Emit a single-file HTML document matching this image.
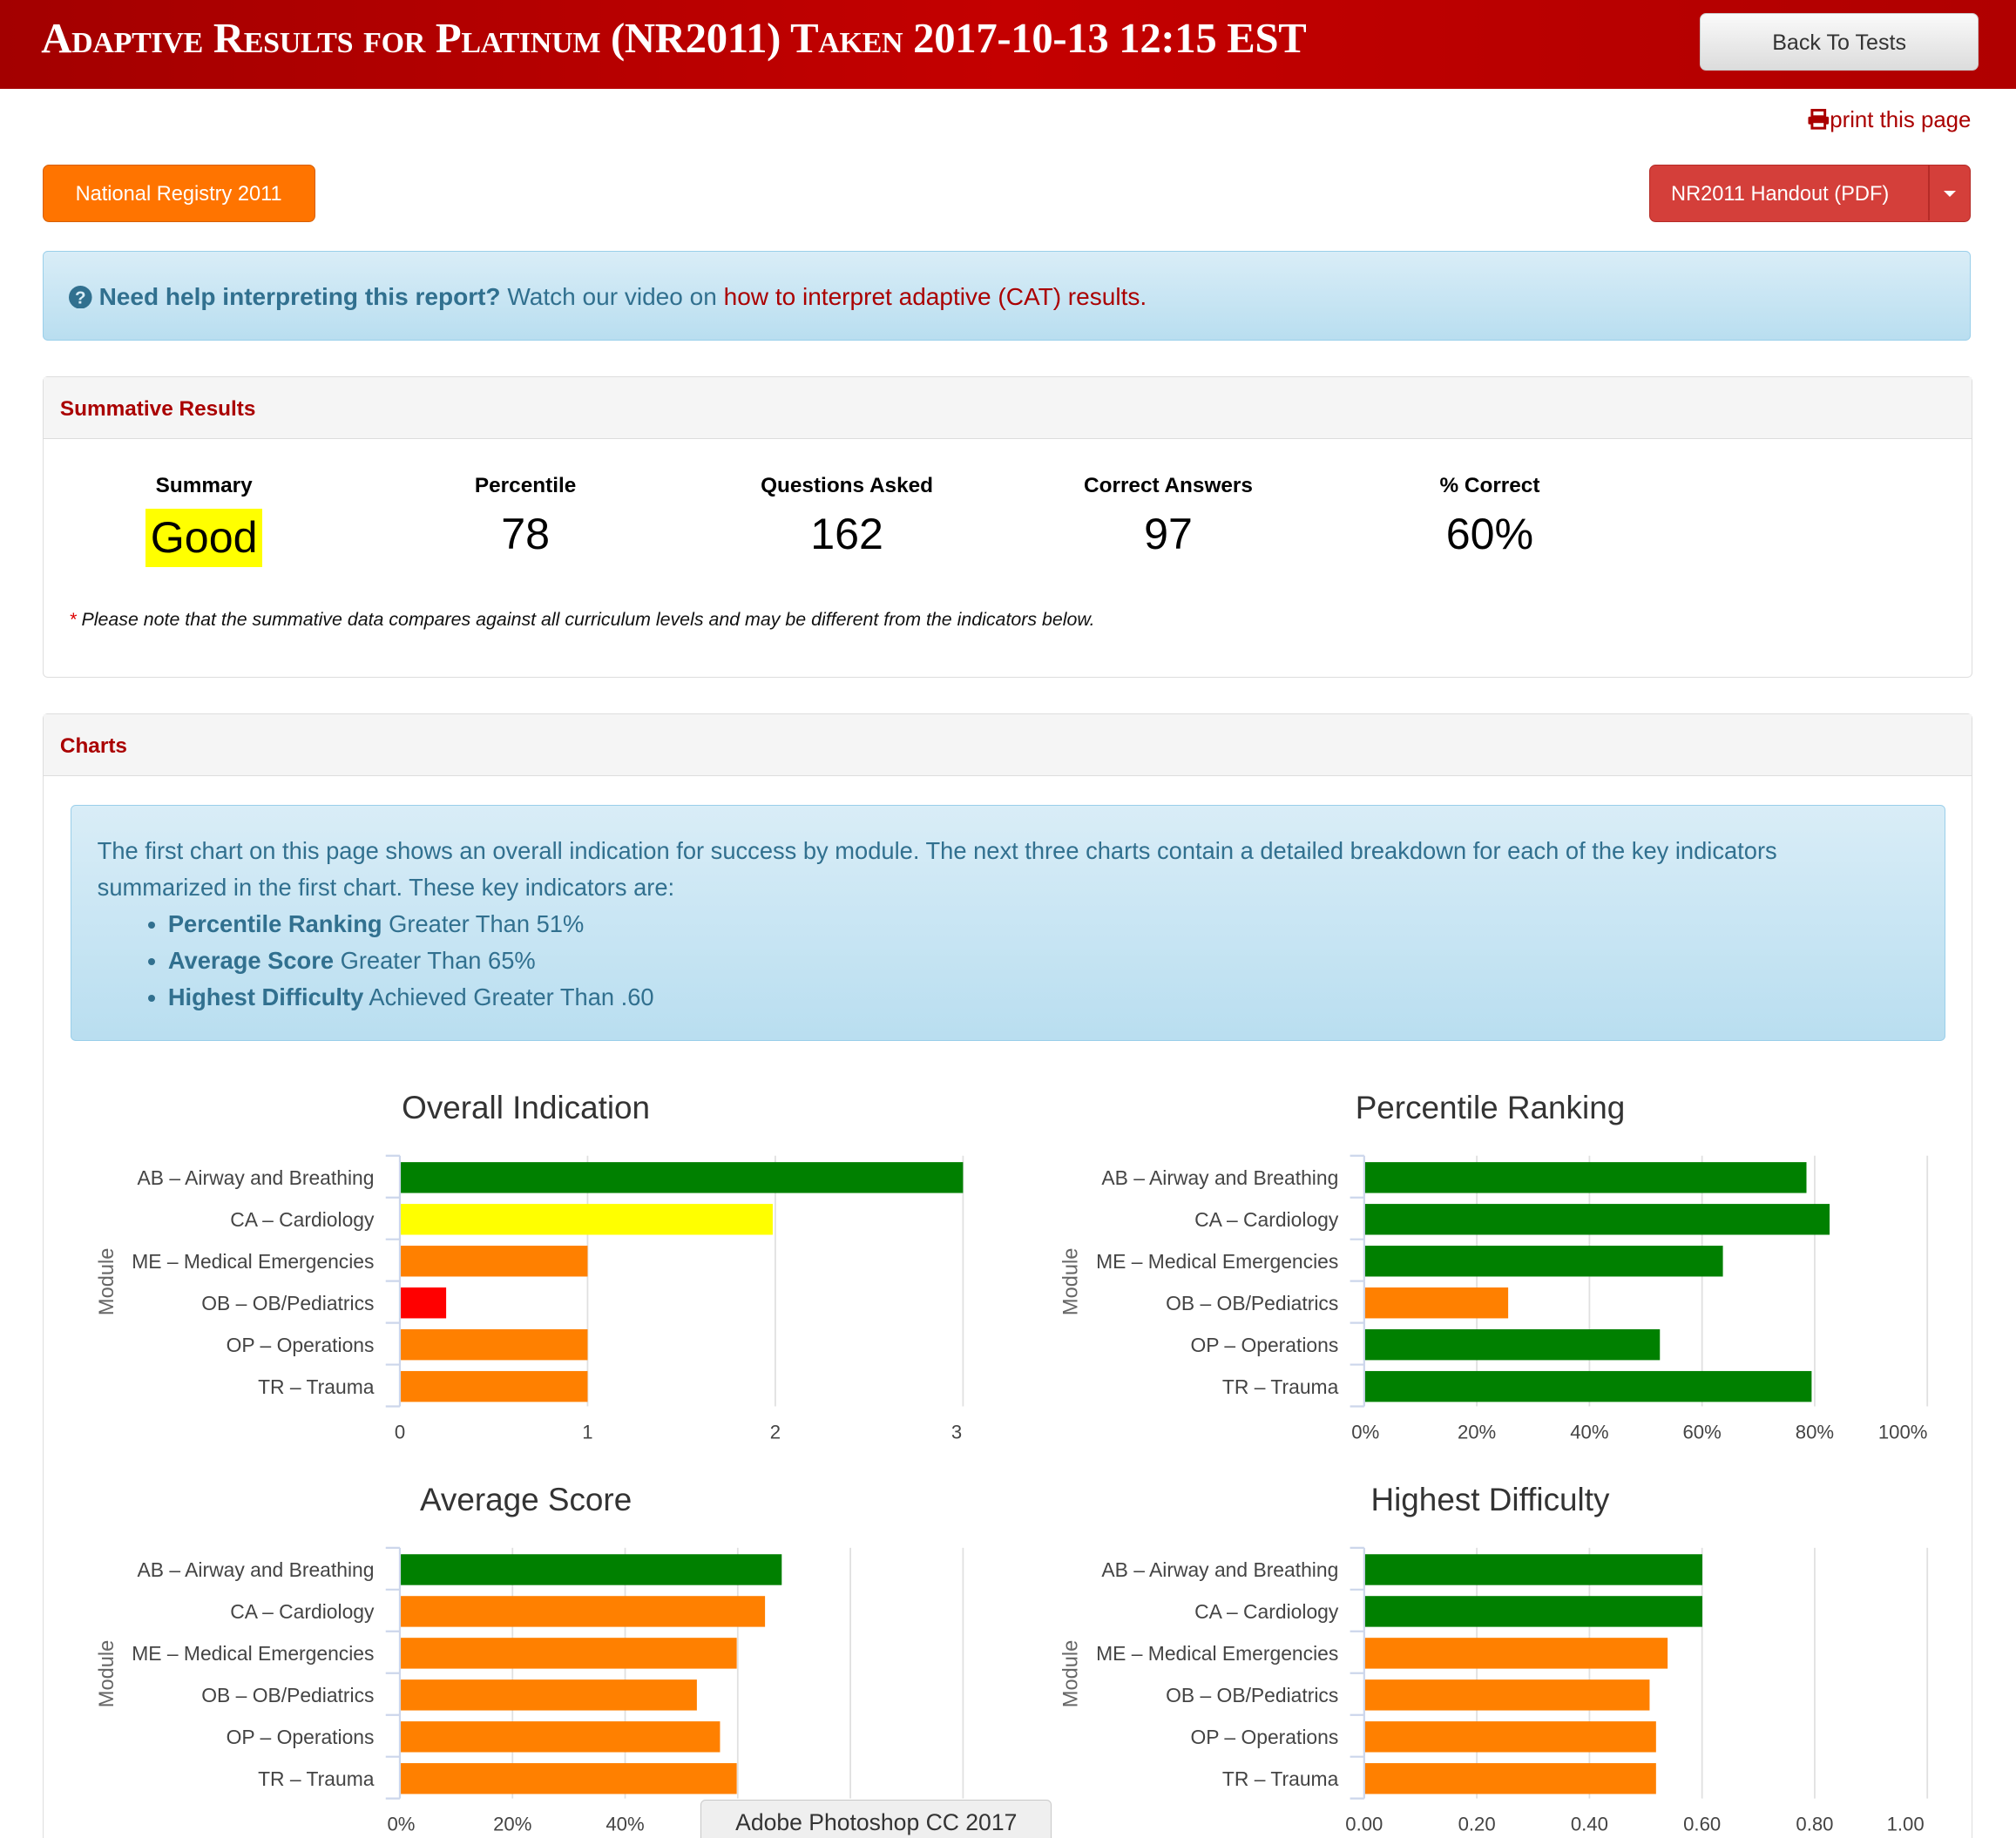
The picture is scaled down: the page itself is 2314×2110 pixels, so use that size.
<!DOCTYPE html>
<html><head><meta charset="utf-8">
<style>
html,body{margin:0;padding:0;background:#fff;overflow:hidden}
body{zoom:1.4758;width:1568px;height:1430px;position:relative;font-family:"Liberation Sans",sans-serif;}
.abs{position:absolute}
.hdr{left:0;top:0;width:1568px;height:69px;background:linear-gradient(90deg,#a30000 0%,#c40000 50%,#b00000 100%);}
.title{left:32px;top:11px;color:#fff;font-family:"Liberation Serif",serif;font-weight:bold;font-variant:small-caps;font-size:33px;letter-spacing:-0.2px;white-space:nowrap}
.btn{border-radius:5px;box-sizing:border-box;white-space:nowrap;text-align:center}
.back{left:1322px;top:10px;width:217px;height:45px;background:linear-gradient(#fafafa,#dcdcdc);border:1px solid #ccc;color:#333;font-size:17px;line-height:45px}
.print{right:35px;top:84px;color:#a00;font-size:17.5px}
.nr{left:33px;top:128px;width:212px;height:45px;background:#ff7400;border:1px solid #d65f00;color:#fff;font-size:16px;line-height:45px}
.pdf{left:1283px;top:128px;width:250px;height:45px;background:#d43f3a;border:1px solid #b52b27;color:#fff;font-size:16px;line-height:45px;text-align:left;padding-left:16px}
.alert{box-sizing:border-box;border:1px solid #9acfea;border-radius:4px;background:linear-gradient(#d9edf7,#b9def0);color:#31708f}
.panel{box-sizing:border-box;border:1px solid #ddd;border-radius:4px;background:#fff}
.ph{position:absolute;left:0;top:0;right:0;height:48px;background:#f5f5f5;border-bottom:1px solid #ddd;color:#a00;font-weight:bold;font-size:16.5px;line-height:50px;padding-left:13px;box-sizing:border-box}
.col{position:absolute;width:250px;text-align:center;color:#000}
.col b{display:block;font-size:16.5px;margin-top:0}
.col span{display:inline-block;font-size:34px;margin-top:8px;padding:0 3px}
</style></head><body>
<div class="abs hdr"></div>
<div class="abs title">Adaptive Results for Platinum (NR2011) Taken 2017-10-13 12:15 EST</div>
<div class="abs btn back">Back To Tests</div>
<div class="abs print"><svg width="18" height="16" viewBox="0 0 18 16" style="vertical-align:-2px"><rect x="4" y="1" width="10" height="5" fill="none" stroke="#a00" stroke-width="2"/><rect x="1" y="6" width="16" height="6" rx="1" fill="#a00"/><rect x="4" y="10" width="10" height="5" fill="#fff" stroke="#a00" stroke-width="2"/></svg>print this page</div>
<div class="abs btn nr">National Registry 2011</div>
<div class="abs btn pdf">NR2011 Handout (PDF)<div style="position:absolute;left:216px;top:0;width:1px;height:43px;background:#b52b27"></div><div style="position:absolute;left:228px;top:20px;width:0;height:0;border-left:5px solid transparent;border-right:5px solid transparent;border-top:5px solid #fff"></div></div>
<div class="abs alert" style="left:33px;top:195px;width:1500px;height:70px;font-size:19px;line-height:70px;padding-left:20px;white-space:nowrap">
<svg width="18" height="18" viewBox="0 0 18 18" style="vertical-align:-3px"><circle cx="9" cy="9" r="9" fill="#31708f"/><text x="9" y="14" font-size="14" font-weight="bold" fill="#d9edf7" text-anchor="middle" font-family="Liberation Sans">?</text></svg> <b>Need help interpreting this report?</b> Watch our video on <span style="color:#a00">how to interpret adaptive (CAT) results.</span></div>

<div class="abs panel" style="left:33px;top:293px;width:1501px;height:234px">
<div class="ph">Summative Results</div>
<div class="col" style="left:0;top:75px"><b>Summary</b><span style="background:#ff0;padding:3px 4px">Good</span></div>
<div class="col" style="left:250px;top:75px"><b>Percentile</b><span>78</span></div>
<div class="col" style="left:500px;top:75px"><b>Questions Asked</b><span>162</span></div>
<div class="col" style="left:750px;top:75px"><b>Correct Answers</b><span>97</span></div>
<div class="col" style="left:1000px;top:75px"><b>% Correct</b><span>60%</span></div>
<div style="position:absolute;left:20px;top:180px;font-size:14.5px;font-style:italic;color:#111;white-space:nowrap"><span style="color:#d00">*</span> Please note that the summative data compares against all curriculum levels and may be different from the indicators below.</div>
</div>

<div class="abs panel" style="left:33px;top:555px;width:1501px;height:900px;border-bottom:none">
<div class="ph">Charts</div>
</div>
<div class="abs alert" style="left:55px;top:626px;width:1458px;height:184px;font-size:18.5px;line-height:28.5px;padding:21px 0 0 20px">
<div style="max-width:1385px">The first chart on this page shows an overall indication for success by module. The next three charts contain a detailed breakdown for each of the key indicators summarized in the first chart. These key indicators are:</div>
<ul style="margin:0;padding-left:55px">
<li><b>Percentile Ranking</b> Greater Than 51%</li>
<li><b>Average Score</b> Greater Than 65%</li>
<li><b>Highest Difficulty</b> Achieved Greater Than .60</li>
</ul></div>

<svg class="abs" style="left:0;top:0" width="1568" height="1430" font-family="Liberation Sans, sans-serif">
<defs>
<g id="frame">
<line x1="311" y1="899" x2="311" y2="1094" stroke="#ccd6eb" stroke-width="1.5"/>
<g stroke="#ccd6eb" stroke-width="1.5"><line x1="300" y1="899" x2="311" y2="899"/><line x1="300" y1="931.5" x2="311" y2="931.5"/><line x1="300" y1="964" x2="311" y2="964"/><line x1="300" y1="996.5" x2="311" y2="996.5"/><line x1="300" y1="1029" x2="311" y2="1029"/><line x1="300" y1="1061.5" x2="311" y2="1061.5"/><line x1="300" y1="1094" x2="311" y2="1094"/></g>
<g font-size="15.5" fill="#444" text-anchor="end">
<text x="291" y="921.5">AB – Airway and Breathing</text>
<text x="291" y="954">CA – Cardiology</text>
<text x="291" y="986.5">ME – Medical Emergencies</text>
<text x="291" y="1019">OB – OB/Pediatrics</text>
<text x="291" y="1051.5">OP – Operations</text>
<text x="291" y="1084">TR – Trauma</text>
</g>
<text transform="translate(88,997) rotate(-90)" font-size="16" fill="#666" text-anchor="middle">Module</text>
</g>
<g id="g5" stroke="#e0e0e0" stroke-width="1.2"><line x1="398.6" y1="899" x2="398.6" y2="1094"/><line x1="486.2" y1="899" x2="486.2" y2="1094"/><line x1="573.8" y1="899" x2="573.8" y2="1094"/><line x1="661.4" y1="899" x2="661.4" y2="1094"/><line x1="749" y1="899" x2="749" y2="1094"/></g>
</defs>

<text x="409" y="870" font-size="25" fill="#333" text-anchor="middle">Overall Indication</text>
<g stroke="#e0e0e0" stroke-width="1.2"><line x1="457" y1="899" x2="457" y2="1094"/><line x1="603" y1="899" x2="603" y2="1094"/><line x1="749" y1="899" x2="749" y2="1094"/></g>
<rect x="311" y="904" width="438" height="24" fill="#008000"/>
<rect x="311" y="936.5" width="290" height="24" fill="#ffff00"/>
<rect x="311" y="969" width="146" height="24" fill="#ff8000"/>
<rect x="311" y="1001.5" width="36" height="24" fill="#ff0000"/>
<rect x="311" y="1034" width="146" height="24" fill="#ff8000"/>
<rect x="311" y="1066.5" width="146" height="24" fill="#ff8000"/>
<use href="#frame"/>
<g font-size="15" fill="#444" text-anchor="middle"><text x="311" y="1119">0</text><text x="457" y="1119">1</text><text x="603" y="1119">2</text><text x="744" y="1119">3</text></g>

<g transform="translate(750,0)">
<text x="409" y="870" font-size="25" fill="#333" text-anchor="middle">Percentile Ranking</text>
<use href="#g5"/>
<rect x="311" y="904" width="344" height="24" fill="#008000"/>
<rect x="311" y="936.5" width="362" height="24" fill="#008000"/>
<rect x="311" y="969" width="279" height="24" fill="#008000"/>
<rect x="311" y="1001.5" width="112" height="24" fill="#ff8000"/>
<rect x="311" y="1034" width="230" height="24" fill="#008000"/>
<rect x="311" y="1066.5" width="348" height="24" fill="#008000"/>
<use href="#frame"/>
<g font-size="15" fill="#444" text-anchor="middle"><text x="312" y="1119">0%</text><text x="398.6" y="1119">20%</text><text x="486.2" y="1119">40%</text><text x="573.8" y="1119">60%</text><text x="661.4" y="1119">80%</text><text x="730" y="1119">100%</text></g>
</g>

<g transform="translate(0,305)">
<text x="409" y="870" font-size="25" fill="#333" text-anchor="middle">Average Score</text>
<use href="#g5"/>
<rect x="311" y="904" width="297" height="24" fill="#008000"/>
<rect x="311" y="936.5" width="284" height="24" fill="#ff8000"/>
<rect x="311" y="969" width="262" height="24" fill="#ff8000"/>
<rect x="311" y="1001.5" width="231" height="24" fill="#ff8000"/>
<rect x="311" y="1034" width="249" height="24" fill="#ff8000"/>
<rect x="311" y="1066.5" width="262" height="24" fill="#ff8000"/>
<use href="#frame"/>
<g font-size="15" fill="#444" text-anchor="middle"><text x="312" y="1119">0%</text><text x="398.6" y="1119">20%</text><text x="486.2" y="1119">40%</text></g>
</g>

<g transform="translate(750,305)">
<text x="409" y="870" font-size="25" fill="#333" text-anchor="middle">Highest Difficulty</text>
<use href="#g5"/>
<rect x="311" y="904" width="263" height="24" fill="#008000"/>
<rect x="311" y="936.5" width="263" height="24" fill="#008000"/>
<rect x="311" y="969" width="236" height="24" fill="#ff8000"/>
<rect x="311" y="1001.5" width="222" height="24" fill="#ff8000"/>
<rect x="311" y="1034" width="227" height="24" fill="#ff8000"/>
<rect x="311" y="1066.5" width="227" height="24" fill="#ff8000"/>
<use href="#frame"/>
<g font-size="15" fill="#444" text-anchor="middle"><text x="311" y="1119">0.00</text><text x="398.6" y="1119">0.20</text><text x="486.2" y="1119">0.40</text><text x="573.8" y="1119">0.60</text><text x="661.4" y="1119">0.80</text><text x="732" y="1119">1.00</text></g>
</g>
</svg>

<div class="abs" style="left:545px;top:1400px;width:273px;height:40px;background:#efefef;border:1px solid #c8c8c8;border-radius:4px;box-sizing:border-box;font-size:18px;color:#333;text-align:center;line-height:34px;white-space:nowrap">Adobe Photoshop CC 2017</div>
</body></html>
